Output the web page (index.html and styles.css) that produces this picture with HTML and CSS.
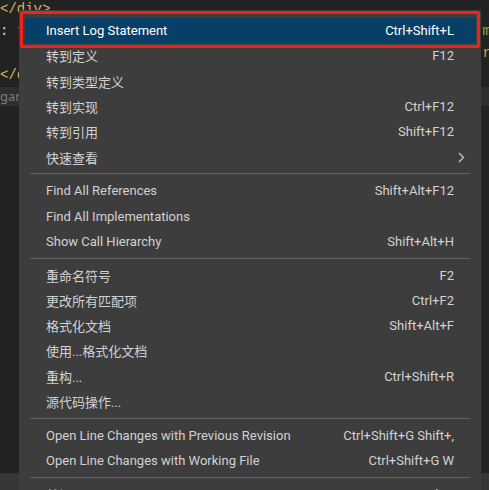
FILE: index.html
```html
<!DOCTYPE html>
<html>
<head>
<meta charset="utf-8">
<link rel="stylesheet" href="styles.css">
</head>
<body>
<div class="editor">
  <div class="code-line"><span class="tag">&lt;/div&gt;</span></div>
  <div class="code-line"><span class="punc">:</span><span class="dim">&nbsp;t</span><span class="right green">m</span></div>
  <div class="code-line"><span class="right orange">r</span></div>
  <div class="code-line"><span class="tag">&lt;/div&gt;</span></div>
  <div class="code-line band"><span class="hint">gan</span></div>
</div>
<div class="panel"></div>

<div class="menu">
  <div class="item active"><span class="label">Insert Log Statement</span><span class="key">Ctrl+Shift+L</span></div>
  <div class="item"><span class="label">转到定义</span><span class="key">F12</span></div>
  <div class="item"><span class="label">转到类型定义</span><span class="key"></span></div>
  <div class="item"><span class="label">转到实现</span><span class="key">Ctrl+F12</span></div>
  <div class="item"><span class="label">转到引用</span><span class="key">Shift+F12</span></div>
  <div class="item"><span class="label">快速查看</span><svg class="chev" width="7" height="11" viewBox="0 0 7 11"><path d="M1 1 L5.5 5.5 L1 10" fill="none" stroke="#cfcfcf" stroke-width="1.2"/></svg></div>
  <div class="sep"></div>
  <div class="item"><span class="label">Find All References</span><span class="key">Shift+Alt+F12</span></div>
  <div class="item"><span class="label">Find All Implementations</span><span class="key"></span></div>
  <div class="item"><span class="label">Show Call Hierarchy</span><span class="key">Shift+Alt+H</span></div>
  <div class="sep"></div>
  <div class="item"><span class="label">重命名符号</span><span class="key">F2</span></div>
  <div class="item"><span class="label">更改所有匹配项</span><span class="key">Ctrl+F2</span></div>
  <div class="item"><span class="label">格式化文档</span><span class="key">Shift+Alt+F</span></div>
  <div class="item"><span class="label">使用...格式化文档</span><span class="key"></span></div>
  <div class="item"><span class="label">重构...</span><span class="key">Ctrl+Shift+R</span></div>
  <div class="item"><span class="label">源代码操作...</span><span class="key"></span></div>
  <div class="sep"></div>
  <div class="item"><span class="label">Open Line Changes with Previous Revision</span><span class="key">Ctrl+Shift+G Shift+,</span></div>
  <div class="item"><span class="label">Open Line Changes with Working File</span><span class="key">Ctrl+Shift+G W</span></div>
  <div class="sep"></div>
  <div class="item"><span class="label">剪切</span><span class="key">Ctrl+X</span></div>
</div>
<div class="mark"></div>
</body>
</html>
```
FILE: styles.css
```css
html, body {
  margin: 0;
  padding: 0;
}
body {
  width: 489px;
  height: 490px;
  overflow: hidden;
  background: #222222;
  display: flex;
  flex-direction: column;
  position: relative;
}
.editor {
  flex: 1;
  margin-top: -2px;
  font-family: "Liberation Mono", monospace;
  font-size: 14px;
}
.code-line {
  height: 22px;
  line-height: 22px;
  display: flex;
  white-space: pre;
  color: #d4d4d4;
}
.code-line.band {
  background: #2e2e2e;
  height: 19px;
  line-height: 19px;
  margin-top: 1px;
}
.tag { color: #d8b45f; }
.punc { color: #d4d4d4; }
.dim { color: #8a8a8a; }
.right { margin-left: auto; margin-right: -2px; }
.green { color: #8ea85a; }
.orange { color: #e09a3c; }
.hint {
  font-family: "Noto Sans", sans-serif;
  font-size: 13px;
  color: #7c7c7c;
}
.panel {
  height: 17px;
  background: #363636;
}

.menu {
  position: absolute;
  left: 19px;
  top: 10px;
  width: 462px;
  height: 490px;
  background: #3d3d3d;
  padding-top: 8px;
  box-sizing: border-box;
  font-family: Roboto, "Noto Sans CJK SC", sans-serif;
  font-size: 13px;
  color: #d2d2d2;
}
.item {
  height: 25.3px;
  margin: 0 5px 0 6px;
  padding: 0 22px 0 21px;
  display: flex;
  align-items: center;
  justify-content: space-between;
  white-space: nowrap;
}
.item.active {
  background: #073f66;
  color: #ffffff;
}
.chev {
  margin-right: -11px;
}
.sep {
  height: 1px;
  margin: 3.7px 11px;
  background: #626262;
}
.mark {
  position: absolute;
  left: 20px;
  top: 11px;
  width: 460px;
  height: 37px;
  box-sizing: border-box;
  border: 3.5px solid #f2211c;
  border-radius: 2px;
}
```
